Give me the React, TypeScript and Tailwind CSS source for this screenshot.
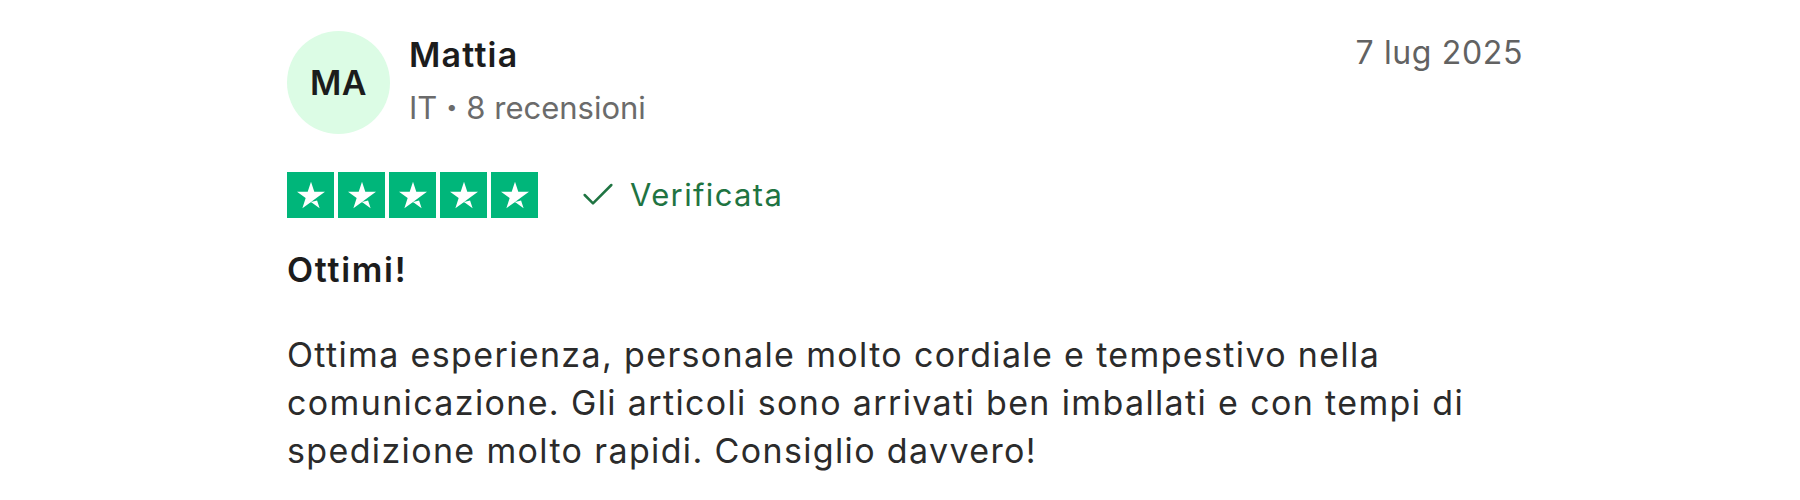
import { Check } from 'lucide-react'

const font = { fontFamily: 'Inter, "Noto Sans", sans-serif' }

// trustpilot-style star, lower right leg split off
function Star() {
  return (
    <div className="flex h-[46px] w-[47px] items-center justify-center bg-[#00b67a]">
      <svg viewBox="0 0 96 96" className="h-[40px] w-[40px]" fill="#fff">
        <path d="M48 64.7 62.6 61l6.1 18.8L48 64.7zM81.6 40.4H55.9L48 16.2l-7.9 24.2H14.4l20.8 15-7.9 24.2 20.8-15 12.8-9.2 20.7-15z" />
      </svg>
    </div>
  )
}

export default function App() {
  return (
    <div className="min-h-[500px] w-full bg-white" style={font}>
      <div className="ml-[287px] w-[1236px] pt-[31px]">
        <div className="flex items-start justify-between">
          <div className="flex items-start gap-[19px]">
            <div className="flex h-[103px] w-[103px] items-center justify-center rounded-full bg-[#dcfce5] text-[34px] font-semibold tracking-[0.01em] text-[#1c1c1c]">
              MA
            </div>
            <div className="pt-[4px]">
              <div className="text-[34px] font-semibold leading-[40px] tracking-[0.035em] text-[#1c1c1c]">Mattia</div>
              <div className="mt-[13px] text-[31px] leading-[40px] text-[#6b6b6b]">
                IT <span className="font-black">·</span> 8 recensioni
              </div>
            </div>
          </div>
          <div className="pt-[2px] text-[32px] leading-[40px] tracking-[0.02em] text-[#626262]">7 lug 2025</div>
        </div>

        <div className="mt-[38px] flex items-center">
          <div className="flex gap-[4px]">
            <Star />
            <Star />
            <Star />
            <Star />
            <Star />
          </div>
          <div className="ml-[40px] flex items-center gap-[12px] text-[31px] leading-[40px] tracking-[0.044em] text-[#1f7442]">
            <Check className="h-[40px] w-[40px]" strokeWidth={1.5} />
            <span>Verificata</span>
          </div>
        </div>

        <h2 className="mt-[30px] text-[34px] font-semibold leading-[44px] tracking-[0.05em] text-[#1c1c1c]">Ottimi!</h2>

        <p className="mt-[39px] text-[34px] leading-[48px] tracking-[0.04em] text-[#2b2b2b]">
          Ottima esperienza, personale molto cordiale e tempestivo nella comunicazione. Gli articoli sono arrivati ben
          imballati e con tempi di spedizione molto rapidi. Consiglio davvero!
        </p>
      </div>
    </div>
  )
}
